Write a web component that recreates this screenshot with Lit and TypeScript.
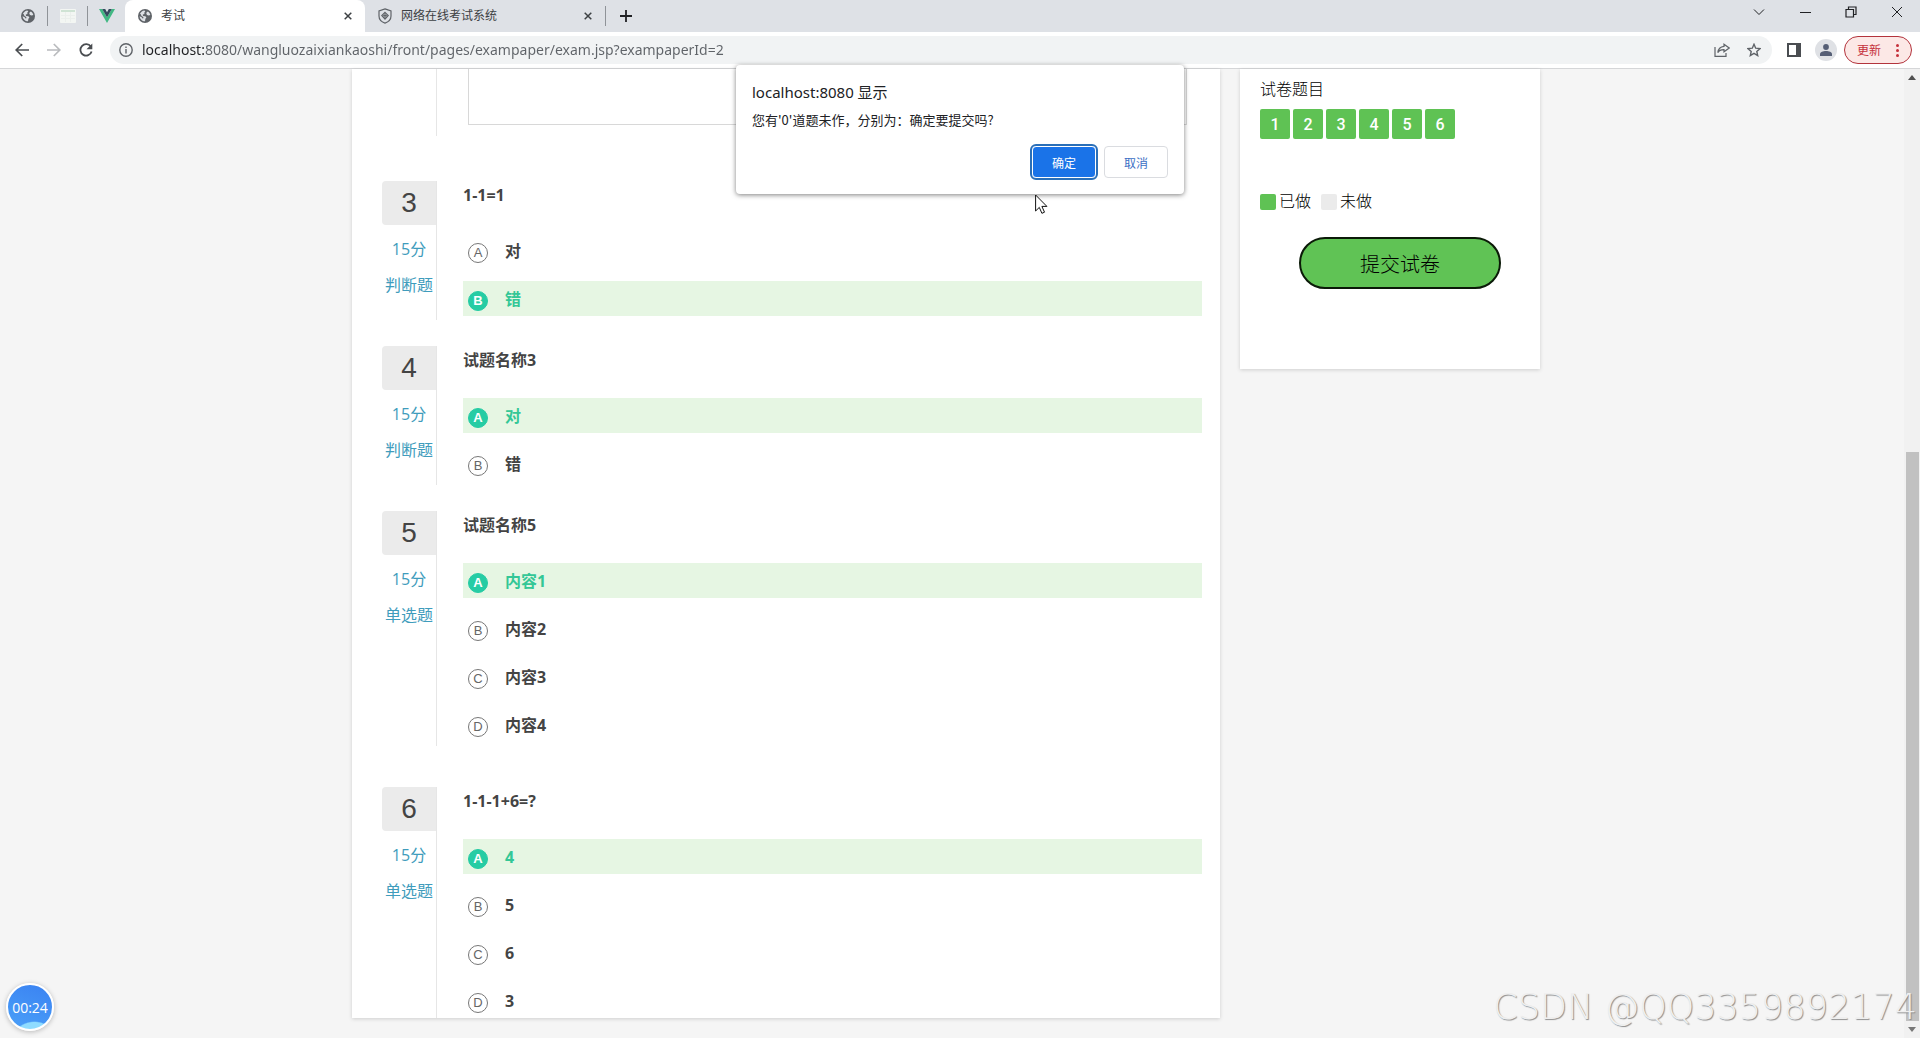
import { LitElement, html, css, nothing } from "lit";
import { customElement, property, state } from "lit/decorators.js";
import { classMap } from "lit/directives/class-map.js";

interface Question {
  no: number;
  score: string;
  kind: string;
  title: string;
  options: string[];
  answer: number;
}

const QUESTIONS: Question[] = [
  { no: 3, score: "15分", kind: "判断题", title: "1-1=1", options: ["对", "错"], answer: 1 },
  { no: 4, score: "15分", kind: "判断题", title: "试题名称3", options: ["对", "错"], answer: 0 },
  { no: 5, score: "15分", kind: "单选题", title: "试题名称5", options: ["内容1", "内容2", "内容3", "内容4"], answer: 0 },
  { no: 6, score: "15分", kind: "单选题", title: "1-1-1+6=?", options: ["4", "5", "6", "3"], answer: 0 },
];

const globe = html`<svg class="ico" width="14" height="14" viewBox="0 0 14 14" aria-hidden="true">
  <circle cx="7" cy="7" r="7" fill="#5f6368" />
  <path d="M2 4.6C3 2.900 4.600 1.800 6.400 1.500L7.300 2.600 6.200 3.800 6.500 4.900 4.800 5.600 5 6.900 7.400 7.200 8.400 8.500 7.400 9.700 7 12.300C4.200 12.300 1.800 10 1.600 7.200L3.700 8.200 4.500 9.600 5.400 9.200 5.300 8 3.500 7 2.900 5.400ZM8.700 3.200 9.900 2.400C11.200 3.200 12 4.500 12.300 6L10.700 6.500 9 5.900 8.300 4.600Z" fill="#dee1e6" />
</svg>`;

@customElement("browser-bar")
class BrowserBar extends LitElement {
  static styles = css`
    :host { display: block; font-family: "Open Sans", "Noto Sans CJK SC", sans-serif; color: #3c4043; }
    button { border: 0; background: none; padding: 0; margin: 0; font: inherit; color: inherit; display: grid; place-items: center; }
    svg { display: block; }
    .tabs { display: flex; height: 32px; background: #dee1e6; align-items: center; font-size: 12px; }
    .pin { width: 39px; height: 100%; }
    .first { margin-left: 8px; }
    .last { width: 37px; }
    .bar { width: 1px; height: 20px; background: #8f9398; }
    .tab { display: flex; align-items: center; gap: 9px; width: 240px; height: 32px; padding: 0 13px; box-sizing: border-box; }
    .tab.on { background: #fff; border-radius: 8px 8px 0 0; }
    .tab .name { flex: 1; line-height: 16px; }
    .new { width: 40px; height: 32px; color: #202124; }
    .win { margin-left: auto; display: flex; align-self: flex-start; }
    .win button { width: 46px; height: 24px; color: #202124; }
    .tools { display: flex; align-items: center; height: 36px; background: #fff; border-bottom: 1px solid #d5d6d8; padding: 0 8px 0 6px; color: #5f6368; }
    .nav { width: 32px; height: 28px; }
    .omni { flex: 1; display: flex; align-items: center; height: 28px; border-radius: 14px; background: #f1f3f4; margin-left: 8px; padding: 0 2px 0 9px; }
    .omni .info { margin-right: 9px; }
    .url {
      flex: 1; min-width: 0; border: 0; outline: 0; padding: 0; font: 14px/20px "Noto Sans", sans-serif; color: transparent;
      background: linear-gradient(90deg, #202124 62px, #5f6368 62px); -webkit-background-clip: text; background-clip: text;
    }
    .omni .act { width: 32px; height: 28px; }
    .side { width: 32px; height: 28px; margin-left: 6px; }
    .me { width: 22px; height: 22px; border-radius: 50%; background: #dfe1e5; margin: 0 7px 0 5px; }
    .upd { display: flex; align-items: center; gap: 15px; height: 28px; border: 1px solid #b3333c; border-radius: 14px; background: #fce8e6; color: #c5303b; font-size: 12px; padding: 0 12px; }
  `;

  private close() {
    return html`<button aria-label="关闭标签页"><svg width="8" height="8" viewBox="0 0 8 8"><path d="M.7.7 7.300 7.300M7.300.7.7 7.300" stroke="#3c4043" stroke-width="1.500" /></svg></button>`;
  }

  render() {
    return html`
      <div class="tabs">
        <button class="pin first" aria-label="标签页">${globe}</button>
        <span class="bar"></span>
        <button class="pin" aria-label="标签页">
          <svg width="16" height="14" viewBox="0 0 16 14"><rect width="16" height="14" rx="1" fill="#f3f6f3" /><rect x="1" y="1" width="14" height="2" fill="#cfe3d4" /><path d="M1 6.500h14M1 9.500h14M5.500 3v10M10.500 3v10" stroke="#ebefec" /></svg>
        </button>
        <span class="bar"></span>
        <button class="pin last" aria-label="Vue">
          <svg width="16" height="14" viewBox="0 0 16 14"><path d="M0 0h3.200L8 8.300 12.800 0H16L8 14Z" fill="#41b883" /><path d="M3.200 0h3L8 3.200 9.800 0h3L8 8.300Z" fill="#35495e" /></svg>
        </button>
        <div class="tab on">${globe}<span class="name">考试</span>${this.close()}</div>
        <div class="tab">
          <svg width="14" height="16" viewBox="0 0 14 16" fill="none" stroke="#5f6368" stroke-width="1.200"><path d="M7 .9 13 2.900V8c0 3.400-2.600 5.900-6 7.100C3.600 13.900 1 11.400 1 8V2.900Z" /><path d="M7 4.300 10.200 7.600 7 11 3.800 7.600ZM7 5.800v3.600M5.200 7.600h3.600" /></svg>
          <span class="name">网络在线考试系统</span>${this.close()}
        </div>
        <span class="bar"></span>
        <button class="new" aria-label="新标签页"><svg width="12" height="12" viewBox="0 0 12 12"><path d="M6 0v12M0 6h12" stroke="currentColor" stroke-width="1.800" /></svg></button>
        <div class="win">
          <button aria-label="搜索标签页"><svg width="12" height="8" viewBox="0 0 12 8"><path d="m1 1.500 5 5 5-5" fill="none" stroke="currentColor" /></svg></button>
          <button aria-label="最小化"><svg width="11" height="3" viewBox="0 0 11 3"><path d="M0 1.500h11" stroke="currentColor" /></svg></button>
          <button aria-label="还原"><svg width="12" height="12" viewBox="0 0 12 12" fill="none" stroke="currentColor" stroke-width="1.200"><path d="M1 3.500h7.500V11H1ZM3.500 3.500V1H11v7.500H8.500" /></svg></button>
          <button aria-label="关闭"><svg width="12" height="12" viewBox="0 0 12 12"><path d="m1 1 10 10M11 1 1 11" stroke="currentColor" /></svg></button>
        </div>
      </div>
      <div class="tools">
        <button class="nav" aria-label="后退"><svg width="14" height="14" viewBox="0 0 14 14" fill="none" stroke="#4a4d51" stroke-width="1.700"><path d="M14 7H1.500M7.200 1 1.200 7l6 6" /></svg></button>
        <button class="nav" aria-label="前进"><svg width="14" height="14" viewBox="0 0 14 14" fill="none" stroke="#b9bbbe" stroke-width="1.700"><path d="M0 7h12.500M6.800 1l6 6-6 6" /></svg></button>
        <button class="nav" aria-label="刷新"><svg width="14" height="14" viewBox="0 0 14 14"><path d="M11.800 3.600A5.700 5.700 0 1 0 12.600 8.500" fill="none" stroke="#4a4d51" stroke-width="1.800" /><path d="M13.300.5v5.800H7.500Z" fill="#4a4d51" /></svg></button>
        <div class="omni">
          <button class="info" aria-label="查看网站信息"><svg width="14" height="14" viewBox="0 0 14 14" fill="none" stroke="#5f6368" stroke-width="1.400"><circle cx="7" cy="7" r="6.200" /><path d="M7 6v4.500M7 3.500V5" /></svg></button>
          <input class="url" aria-label="地址栏" value="localhost:8080/wangluozaixiankaoshi/front/pages/exampaper/exam.jsp?exampaperId=2" />
          <button class="act" aria-label="分享"><svg width="16" height="14" viewBox="0 0 16 14" fill="none" stroke="#5f6368" stroke-width="1.200"><path d="M1 4v9.300h11V10" /><path d="M10 1.200 15.200 5 10 8.800V6.600C7 6.500 5 7.500 3.800 9.600 4.200 6 6.200 3.800 10 3.400Z" /></svg></button>
          <button class="act" aria-label="添加书签"><svg width="14" height="14" viewBox="0 0 14 14"><path d="m7 1.300 1.700 3.900 4.300.4-3.200 2.800.9 4.200L7 10.400 3.300 12.600l.9-4.200L1 5.600l4.300-.4Z" fill="none" stroke="#5f6368" stroke-width="1.400" /></svg></button>
        </div>
        <button class="side" aria-label="侧边栏"><svg width="14" height="14" viewBox="0 0 14 14"><path d="M1 1h12v12H1Z" fill="none" stroke="#4a4d51" stroke-width="2" /><path d="M9 1h4v12H9Z" fill="#4a4d51" /></svg></button>
        <button class="me" aria-label="用户"><svg width="12" height="12" viewBox="0 0 12 12" fill="#555e75"><circle cx="6" cy="3" r="2.900" /><path d="M0 12V10c0-2 3-3.100 6-3.100s6 1.100 6 3.100v2Z" /></svg></button>
        <button class="upd">更新<svg width="3" height="13" viewBox="0 0 3 13" fill="#c5303b"><circle cx="1.500" cy="1.500" r="1.500" /><circle cx="1.500" cy="6.500" r="1.500" /><circle cx="1.500" cy="11.500" r="1.500" /></svg></button>
      </div>
    `;
  }
}

@customElement("exam-question")
class ExamQuestion extends LitElement {
  @property({ attribute: false }) item!: Question;
  @state() private picked = -1;

  static styles = css`
    :host { display: flex; }
    .meta { width: 54px; border-right: 1px solid #e6e6e6; text-align: center; color: #3f9cbc; font-size: 16px; line-height: 36px; }
    .no { background: #ebebeb; color: #444; border-radius: 4px 0 0 4px; font: 28px/44px "Liberation Sans", sans-serif; margin-bottom: 6px; }
    .body { flex: 1; min-width: 0; padding: 0 0 4px 26px; }
    :host(:last-child) .body { padding-bottom: 0; }
    .title { margin: 0; font-size: 16px; line-height: 28px; height: 52px; color: #444; }
    fieldset { border: 0; margin: 0; padding: 0; display: grid; gap: 13px; }
    .opt { display: flex; align-items: center; height: 35px; padding-left: 5px; gap: 17px; font-size: 16px; font-weight: 700; color: #444; }
    .opt.on { background: #e6f6e3; color: #33c796; }
    .text { line-height: 34px; padding-top: 1px; }
    .mark { display: grid; place-items: center; padding-top: 4px; font: 13px/20px "Liberation Sans", sans-serif; color: #666; }
    .mark > * { grid-area: 1 / 1; }
    input { appearance: none; width: 20px; height: 20px; margin: 0; border: 1px solid #777; border-radius: 50%; }
    .on input { background: #26cca4; border-color: #26cca4; }
    .on .mark { color: #fff; font-weight: 700; }
  `;

  willUpdate(changed: Map<string, unknown>) {
    if (changed.has("item")) this.picked = this.item.answer;
  }

  render() {
    const q = this.item;
    return html`
      <div class="meta">
        <div class="no">${q.no}</div>
        <div>${q.score}</div>
        <div>${q.kind}</div>
      </div>
      <div class="body">
        <h2 class="title" id="t">${q.title}</h2>
        <fieldset aria-labelledby="t">
          ${q.options.map(
            (text, i) => html`<label class=${classMap({ opt: true, on: i === this.picked })}>
              <span class="mark">
                <input type="radio" name="answer" .checked=${i === this.picked} @change=${() => (this.picked = i)} />
                <span>${"ABCD"[i]}</span>
              </span>
              <span class="text">${text}</span>
            </label>`
          )}
        </fieldset>
      </div>
    `;
  }
}

@customElement("app-root")
class AppRoot extends LitElement {
  @state() private asking = true;

  static styles = css`
    :host { display: flex; flex-direction: column; min-height: 100vh; background: #f5f5f5; position: relative; font-family: "Open Sans", "Noto Sans CJK SC", sans-serif; color: #333; }
    .view { flex: 1; display: flex; }
    .page { flex: 1; min-width: 0; padding-bottom: 20px; }
    .wrap { max-width: 1188px; margin: 0 auto; padding-right: 12px; display: flex; gap: 20px; align-items: flex-start; }
    .card { background: #fff; box-shadow: 0 1px 4px rgba(0, 0, 0, 0.16); }
    .paper { flex: 1; min-width: 0; padding: 0 18px 0 30px; display: grid; gap: 26px; }
    .essay { display: flex; margin-bottom: 19px; }
    .rail { width: 54px; height: 67px; border-right: 1px solid #e6e6e6; }
    .essay textarea { flex: 1; height: 56px; box-sizing: border-box; margin: 0 15px 0 31px; border: 1px solid #d8d8d8; border-top: 0; resize: none; background: #fff; }
    .long { margin-bottom: 15px; }
    .panel { width: 300px; box-sizing: border-box; padding: 8px 20px 80px; font-size: 16px; font-weight: 300; color: #000; }
    .panel h2 { margin: 0 0 8px; font-size: 16px; font-weight: 300; line-height: 24px; }
    .nums { display: flex; gap: 3px; margin-bottom: 50px; }
    .nums button { width: 30px; height: 30px; border: 0; border-radius: 2px; padding: 0; background: #5fc254; color: #fff; font: 500 16px "Roboto", sans-serif; }
    .legend { display: flex; align-items: center; gap: 3px; line-height: 24px; margin-bottom: 24px; }
    .sw { width: 16px; height: 16px; border-radius: 2px; background: #5fc254; margin-top: 2px; }
    .sw.off { background: #ebebeb; margin-left: 7px; }
    .submit { display: block; width: 202px; height: 52px; margin-left: 39px; border: 2px solid #0b1a08; border-radius: 26px; background: #60c355; color: #000; font: inherit; font-size: 20px; padding: 0; }
    .scroll { width: 16px; background: #f1f1f1; display: flex; flex-direction: column; align-items: center; padding: 6px 0; box-sizing: border-box; }
    .gap { flex: 375; margin-top: 4px; }
    .thumb { flex: 579; width: 13px; background: #c1c1c1; margin-bottom: 6px; }
    .dialog { position: absolute; top: 65px; left: calc(50% - 224px); width: 448px; height: 129px; margin: 0; box-sizing: border-box; padding: 15px 16px 16px; border: 0; border-radius: 4px; background: #fff; box-shadow: 0 1px 5px rgba(0, 0, 0, 0.5); color: #202124; display: flex; flex-direction: column; }
    .dialog h1 { margin: 0 0 6px; font: 15px/24px "Noto Sans", "Noto Sans CJK SC", sans-serif; }
    .dialog p { margin: 0; font: 13px/20px "Noto Sans CJK SC", sans-serif; }
    .acts { display: flex; justify-content: flex-end; gap: 8px; margin-top: auto; }
    .acts button { width: 64px; height: 32px; border-radius: 4px; font: 12px "Noto Sans CJK SC", sans-serif; padding: 0; }
    .ok { background: #1a73e8; color: #fff; border: 1px solid #fff; outline: 2px solid #2a6fb8; }
    .no { background: #fff; color: #3b6fc4; border: 1px solid #dadce0; }
    .cursor { position: absolute; left: 1035px; top: 194px; }
    .timer { position: absolute; left: 6px; bottom: 7px; width: 48px; height: 48px; box-sizing: border-box; border: 2px solid #fff; border-radius: 50%; background: radial-gradient(circle at 60% 140%, #8fdcff 0 36%, transparent 38%), linear-gradient(200deg, #3a82f2, #4ba0f8); box-shadow: 0 1px 5px rgba(0, 0, 0, 0.25); color: #fff; font-size: 14px; display: grid; place-items: center; }
    .mark { position: absolute; right: 3px; bottom: 4px; font: 200 35px/54px "DejaVu Sans", sans-serif; color: #efefef; text-shadow: 1px 1px 1px #8c8c8c; white-space: nowrap; }
  `;

  render() {
    return html`
      <browser-bar></browser-bar>
      <div class="view">
        <main class="page">
          <div class="wrap">
            <section class="card paper">
              <div class="essay">
                <div class="rail"></div>
                <textarea aria-label="答案"></textarea>
              </div>
              ${QUESTIONS.map(
                (q, i) => html`<exam-question
                  class=${classMap({ long: q.options.length > 2 && i < QUESTIONS.length - 1 })}
                  .item=${q}
                ></exam-question>`
              )}
            </section>
            <aside class="card panel">
              <h2>试卷题目</h2>
              <div class="nums">${[1, 2, 3, 4, 5, 6].map((n) => html`<button>${n}</button>`)}</div>
              <div class="legend">
                <span class="sw"></span><span>已做</span><span class="sw off"></span><span>未做</span>
              </div>
              <button class="submit" @click=${() => (this.asking = true)}>提交试卷</button>
            </aside>
          </div>
        </main>
        <div class="scroll">
          <svg width="8" height="5" viewBox="0 0 8 5"><path d="M4 0 8 5H0Z" fill="#505050" /></svg>
          <span class="gap"></span><span class="thumb"></span>
          <svg width="8" height="5" viewBox="0 0 8 5"><path d="M0 0h8L4 5Z" fill="#777" /></svg>
        </div>
      </div>
      ${this.asking
        ? html`<div class="dialog" role="dialog" aria-labelledby="dt">
            <h1 id="dt">localhost:8080 显示</h1>
            <p>您有'0'道题未作，分别为：确定要提交吗?</p>
            <div class="acts">
              <button class="ok" @click=${() => (this.asking = false)}>确定</button>
              <button class="no" @click=${() => (this.asking = false)}>取消</button>
            </div>
          </div>`
        : nothing}
      <svg class="cursor" width="13" height="21" viewBox="0 0 13 21" aria-hidden="true">
        <path d="M.6 1v16l3.700-3.600 2.600 5.900 2.600-1.100-2.600-5.800h5Z" fill="#fff" stroke="#111" />
      </svg>
      <div class="timer">00:24</div>
      <div class="mark">CSDN @QQ3359892174</div>
    `;
  }
}
